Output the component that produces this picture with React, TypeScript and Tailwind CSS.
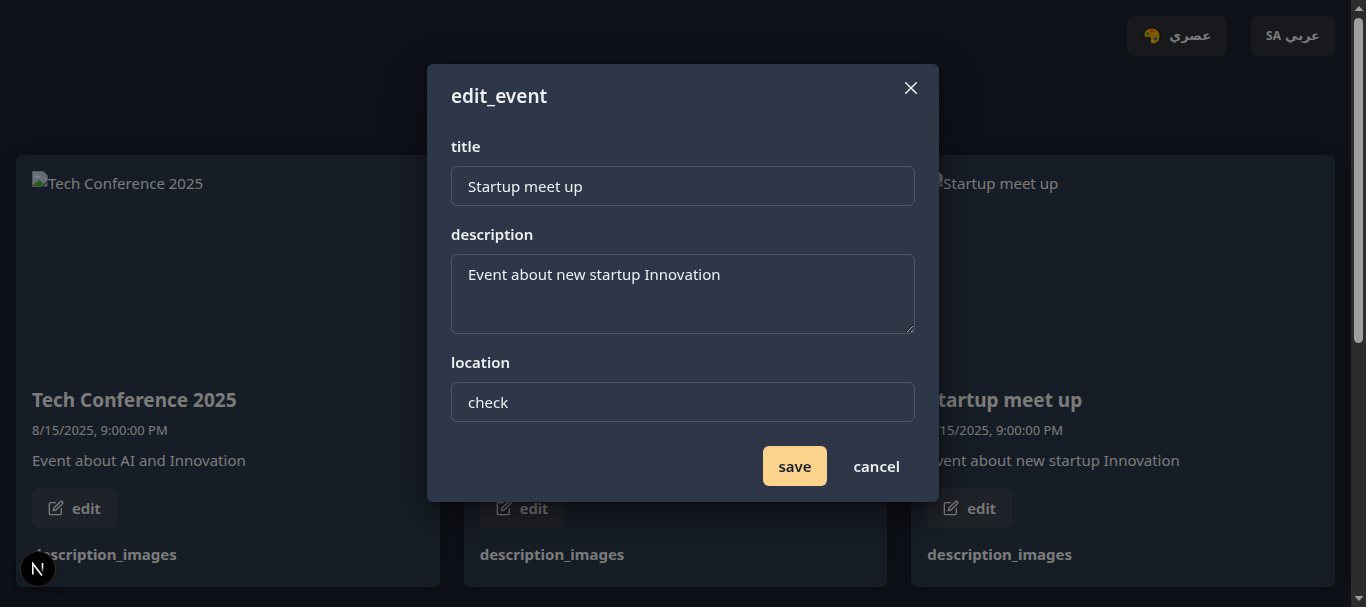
import { FiEdit } from "react-icons/fi";

const events = [
  { name: "Tech Conference 2025", date: "8/15/2025, 9:00:00 PM", about: "Event about AI and Innovation" },
  { name: "Tech Conference", date: "8/15/2025, 9:00:00 PM", about: "Event about AI" },
  { name: "Startup meet up", date: "8/15/2025, 9:00:00 PM", about: "Event about new startup Innovation" },
];

function PaletteIcon() {
  return (
    <svg viewBox="0 0 18 18" className="size-[18px]" aria-hidden="true">
      <path
        d="M9 .9C4.500.9.9 4 .9 7.800.9 9.800 1.800 10.800 3.200 10.800 4.600 10.800 5.600 10 6.800 10.500 8.100 11.100 7.300 12.500 7.100 14 6.900 15.900 8 17.100 10 17.100 14.200 17.100 17.100 13.600 17.100 9.200 17.100 4.500 13.600.9 9 .9z"
        fill="#f0a800"
        stroke="#100d00"
        strokeWidth="1"
      />
      <circle cx="4.700" cy="6.500" r="1.400" fill="#16a516" />
      <circle cx="9" cy="4" r="1.400" fill="#e04413" />
      <circle cx="13.200" cy="6.400" r="1.200" fill="#f7d000" />
      <circle cx="12.500" cy="11.500" r="1.600" fill="#1467df" />
      <circle cx="9.700" cy="14.300" r="1.100" fill="#f5dca0" />
    </svg>
  );
}

function MissingImage({ label }: { label: string }) {
  return (
    <div role="img" aria-label={label} className="flex h-[200px] items-start overflow-hidden">
      <svg viewBox="0 0 16 16" className="size-4 shrink-0" aria-hidden="true">
        <path d="M.5.5h10.500l4.500 4.500v4.500l-6 6h-9z" fill="#c4d5f2" stroke="#a0a4aa" />
        <path d="M11 .5v4.500h4.500z" fill="#f5f5f5" stroke="#a0a4aa" />
        <path d="M2.500 6.500c0-2 2-2.500 3-1.500 1.500-1 3 0 2.500 1.500z" fill="#fff" />
        <path d="M1 15v-1.500l6-4.500 4.500 3.500-2.500 2.500z" fill="#4faf25" />
        <path d="M11 15.500l4.500-4.500v4.500z" fill="#b9bdc4" />
      </svg>
      <span className="leading-6">{label}</span>
    </div>
  );
}

function EventCard({ name, date, about }: { name: string; date: string; about: string }) {
  return (
    <article className="rounded-md bg-[#2d3849] p-4 shadow-[0_4px_16px_rgba(0,0,0,0.3)]">
      <MissingImage label={name} />
      <h2 className="mt-[17px] text-[19px] leading-6 font-bold">{name}</h2>
      <p className="mt-2 text-[13px] leading-5">{date}</p>
      <p className="mt-2 leading-6">{about}</p>
      <button type="button" className="mt-4 flex h-10 items-center gap-2 rounded-md bg-[#3d424e] px-4 font-semibold">
        <FiEdit className="size-4" />
        edit
      </button>
      <h3 className="mt-4 mb-[7px] leading-5 font-bold">description_images</h3>
    </article>
  );
}

function EditDialog() {
  const box = "block w-full rounded-md border border-white/16 bg-transparent px-4 outline-none";
  return (
    <div
      role="dialog"
      aria-modal="true"
      aria-labelledby="dialog-title"
      className="relative mx-4 w-full max-w-lg rounded-md bg-[#2d3748] shadow-[0_0_0_1px_rgba(0,0,0,0.1),0_5px_10px_rgba(0,0,0,0.2),0_15px_40px_rgba(0,0,0,0.4)]"
    >
      <h2 id="dialog-title" className="px-6 pt-4 pb-3.5 text-[19px] leading-8 font-semibold">
        edit_event
      </h2>
      <button type="button" aria-label="Close" className="absolute top-2 right-3 grid size-8 place-items-center rounded-md">
        <svg viewBox="0 0 12 12" className="size-3" fill="none" stroke="currentColor" strokeWidth="1.500" strokeLinecap="round" aria-hidden="true">
          <path d="M.7.7l10.600 10.600M11.300.7L.7 11.300" />
        </svg>
      </button>
      <form>
        <div className="flex flex-col gap-4 px-6 py-2">
          <div>
            <label htmlFor="title" className="mb-2 block leading-6 font-semibold">title</label>
            <input id="title" defaultValue="Startup meet up" className={`${box} h-10`} />
          </div>
          <div>
            <label htmlFor="description" className="mb-2 block leading-6 font-semibold">description</label>
            <textarea id="description" defaultValue="Event about new startup Innovation" className={`${box} h-20 resize-y py-2 leading-[22px]`} />
          </div>
          <div>
            <label htmlFor="location" className="mb-2 block leading-6 font-semibold">location</label>
            <input id="location" defaultValue="check" className={`${box} h-10`} />
          </div>
        </div>
        <div className="flex justify-end gap-3 px-6 py-4">
          <button type="button" className="h-10 rounded-md bg-[#fbd38d] px-[15px] font-semibold text-[#1a202c]">save</button>
          <button type="button" className="h-10 rounded-md px-[15px] font-semibold">cancel</button>
        </div>
      </form>
    </div>
  );
}

export default function App() {
  return (
    <div className="flex h-screen overflow-hidden bg-[#1b212e] font-['Noto_Sans','DejaVu_Sans',sans-serif] text-[15px] text-white/92">
      <div className="relative min-w-0 flex-1">
        <header className="flex justify-end gap-6 p-4">
          <button type="button" dir="rtl" className="flex h-10 items-center gap-2 rounded-md bg-[#2c3138] px-4 text-[13px] font-semibold">
            عصري <PaletteIcon />
          </button>
          <button type="button" dir="rtl" className="flex h-10 items-center gap-1 rounded-md bg-[#2c3138] px-[15px] text-[13px] font-semibold">
            عربي <span className="text-xs font-bold">SA</span>
          </button>
        </header>
        <main className="mt-[83px] grid grid-cols-3 gap-6 px-4">
          {events.map((event) => (
            <EventCard key={event.name} {...event} />
          ))}
        </main>
        <div className="absolute inset-0 bg-black/48" />
        <button type="button" aria-label="Open developer tools" className="absolute bottom-5 left-5 grid size-9 place-items-center rounded-full border border-[#2c2c2c] bg-black shadow-lg">
          <svg viewBox="0 0 14 14" className="size-3.5" fill="none" aria-hidden="true">
            <defs>
              <linearGradient id="stem" x1="0" y1="0" x2="0" y2="1">
                <stop offset="0.4" stopColor="#fff" />
                <stop offset="1" stopColor="#fff" stopOpacity="0.1" />
              </linearGradient>
            </defs>
            <path d="M1.800 12.500V1.500l9.200 12" stroke="#fff" strokeWidth="1.600" />
            <rect x="10.700" y="1" width="1.600" height="9.500" fill="url(#stem)" />
          </svg>
        </button>
      </div>
      <div aria-hidden="true" className="flex w-[15px] shrink-0 flex-col items-center justify-between bg-[#2c2c2c] py-1.5">
        <svg viewBox="0 0 10 6" className="h-1.5 w-2.5 shrink-0" fill="#9f9f9f"><path d="M5 0l4.500 5H.5z" /></svg>
        <div className="my-1.5 min-h-0 w-full flex-1 px-[3px]">
          <div className="h-[57%] rounded-full bg-[#9f9f9f]" />
        </div>
        <svg viewBox="0 0 10 6" className="h-1.5 w-2.5 shrink-0" fill="#9f9f9f"><path d="M5 6L.5 1h9z" /></svg>
      </div>
      <div className="fixed inset-x-0 top-16 flex justify-center">
        <EditDialog />
      </div>
    </div>
  );
}
